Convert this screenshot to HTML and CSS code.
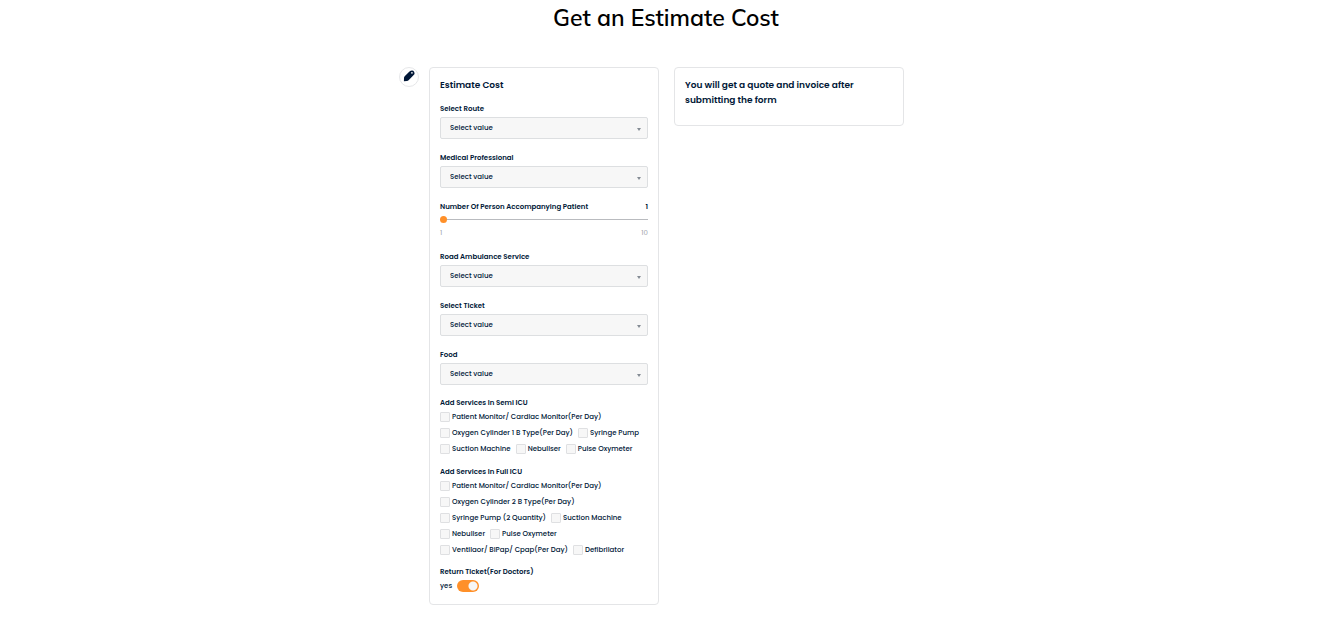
FILE: index.html
```
<!DOCTYPE html>
<html lang="en">
<head>
<meta charset="utf-8">
<meta name="viewport" content="width=device-width, initial-scale=1">
<title>Get an Estimate Cost</title>
<link rel="stylesheet" href="styles.css">
</head>
<body>
<main class="page">
  <h1 class="page-title">Get an Estimate Cost</h1>
  <div class="layout">
    <button class="edit" type="button" aria-label="Edit">
      <svg viewBox="0 0 12 12" width="12" height="12" aria-hidden="true"><path fill="#001737" fill-rule="evenodd" d="M6.2 1.7Q8.4-.2 10.3.7 12.2 2.4 11.2 4.6L5.6 10.2Q4.8 10.8 4 10.9L.9 11.3 1 8Q1.1 6.8 1.7 6.2ZM8.9 2.1a.8.8 0 1 0 .1 1.6.8.8 0 0 0-.1-1.6Z"/></svg>
    </button>
    <form class="card">
      <h2 class="card-title">Estimate Cost</h2>
      <div class="field">
        <label class="label" for="route">Select Route</label>
        <div class="select"><select id="route"><option>Select value</option></select></div>
      </div>
      <div class="field">
        <label class="label" for="medical">Medical Professional</label>
        <div class="select"><select id="medical"><option>Select value</option></select></div>
      </div>
      <div class="field range">
        <div class="range-head"><label class="label" for="persons">Number Of Person Accompanying Patient</label><output class="label" for="persons">1</output></div>
        <input class="slider" id="persons" type="range" min="1" max="10" value="1">
        <div class="range-scale"><span>1</span><span>10</span></div>
      </div>
      <div class="field">
        <label class="label" for="road">Road Ambulance Service</label>
        <div class="select"><select id="road"><option>Select value</option></select></div>
      </div>
      <div class="field">
        <label class="label" for="ticket">Select Ticket</label>
        <div class="select"><select id="ticket"><option>Select value</option></select></div>
      </div>
      <div class="field">
        <label class="label" for="food">Food</label>
        <div class="select"><select id="food"><option>Select value</option></select></div>
      </div>
      <fieldset class="services">
        <legend class="label">Add Services In Semi ICU</legend>
        <div class="checks">
          <label class="check"><input type="checkbox">Patient Monitor/ Cardiac Monitor(Per Day)</label>
          <label class="check"><input type="checkbox">Oxygen Cylinder 1 B Type(Per Day)</label>
          <label class="check"><input type="checkbox">Syringe Pump</label>
          <label class="check"><input type="checkbox">Suction Machine</label>
          <label class="check"><input type="checkbox">Nebuliser</label>
          <label class="check"><input type="checkbox">Pulse Oxymeter</label>
        </div>
      </fieldset>
      <fieldset class="services">
        <legend class="label">Add Services In Full ICU</legend>
        <div class="checks">
          <label class="check"><input type="checkbox">Patient Monitor/ Cardiac Monitor(Per Day)</label>
          <label class="check"><input type="checkbox">Oxygen Cylinder 2 B Type(Per Day)</label>
          <label class="check"><input type="checkbox">Syringe Pump (2 Quantity)</label>
          <label class="check"><input type="checkbox">Suction Machine</label>
          <label class="check"><input type="checkbox">Nebuliser</label>
          <label class="check"><input type="checkbox">Pulse Oxymeter</label>
          <label class="check"><input type="checkbox">Ventilaor/ BiPap/ Cpap(Per Day)</label>
          <label class="check"><input type="checkbox">Defibrilator</label>
        </div>
      </fieldset>
      <fieldset class="services">
        <legend class="label">Return Ticket(For Doctors)</legend>
        <label class="toggle">yes<input type="checkbox" role="switch" checked></label>
      </fieldset>
    </form>
    <section class="card">
      <h2 class="card-title">You will get a quote and invoice after submitting the form</h2>
    </section>
  </div>
</main>
</body>
</html>
```
FILE: styles.css
```
* {
  box-sizing: border-box;
}

body {
  margin: 0;
  background: #fff;
  color: #001737;
  font: 500 7px/12px Poppins, Inter, "Liberation Sans", sans-serif;
}

.page {
  padding: 3px 12px 17px;
}

.page-title {
  margin: 0 0 34px;
  padding-left: 5px;
  color: #000;
  font: 600 23px/30px Muli, Mulish, Nunito, "Open Sans", sans-serif;
  text-align: center;
}

.layout {
  display: flex;
  align-items: flex-start;
  gap: 15px;
  max-width: 529px;
  margin: 0 auto;
  padding-right: 24px;
}

.edit {
  display: flex;
  flex: none;
  align-items: center;
  justify-content: center;
  width: 20px;
  height: 20px;
  margin-right: -5px;
  padding: 0 0 2px;
  border: 1px solid #e6e7e9;
  border-radius: 50%;
  background: #fff;
}

.card {
  flex: 1 1 0;
  min-width: 0;
  padding: 10px 10px 10px;
  border: 1px solid #e4e5e7;
  border-radius: 4px;
}

.card-title {
  margin: 0 0 10px;
  font-size: 9px;
  font-weight: 600;
  line-height: 15px;
}

section.card {
  padding-bottom: 7px;
}

.field {
  margin-bottom: 13px;
}

.field:last-of-type {
  margin-bottom: 12px;
}

.label {
  display: block;
  padding: 0;
  font-weight: 600;
}

.select {
  position: relative;
  margin-top: 2px;
}

.select::after {
  content: "";
  position: absolute;
  right: 7px;
  top: 11px;
  border: 2px solid transparent;
  border-top: 3px solid #848b94;
  border-bottom: 0;
  pointer-events: none;
}

.select select {
  display: block;
  width: 100%;
  height: 22px;
  padding: 0 9px 1px;
  border: 1px solid #dddfe1;
  border-radius: 2px;
  appearance: none;
  background: #f7f7f7;
  color: inherit;
  font: inherit;
}

.range {
  margin-bottom: 12px;
}

.range-head,
.range-scale {
  display: flex;
  justify-content: space-between;
}

.slider {
  display: block;
  width: 100%;
  height: 7px;
  margin: 3px 0 4px;
  appearance: none;
  background: linear-gradient(#b9bbbf, #b9bbbf) center / 100% 1px no-repeat;
}

.slider::-webkit-slider-thumb {
  appearance: none;
  width: 7px;
  height: 7px;
  border-radius: 50%;
  background: #ff9029;
}

.range-scale {
  color: #a0a4aa;
  font-weight: 400;
}

.services {
  min-width: 0;
  margin: 0 0 9px;
  padding: 0;
  border: 0;
}

.services + .services {
  margin-bottom: 8px;
}

.services:last-child {
  margin-bottom: 0;
}

.checks {
  display: flex;
  flex-wrap: wrap;
  column-gap: 5px;
}

.check {
  display: flex;
  align-items: center;
  gap: 2px;
  height: 16px;
  white-space: nowrap;
}

.check input {
  width: 10px;
  height: 10px;
  margin: 0;
  border: 1px solid #dfe0e2;
  border-radius: 1px;
  appearance: none;
  background: #f7f7f7;
}

.toggle {
  display: flex;
  align-items: center;
  gap: 5px;
  height: 16px;
}

.services .toggle input {
  width: 22px;
  height: 12px;
  margin: 0;
  border-radius: 6px;
  appearance: none;
  background: radial-gradient(circle at 16px 6px, #f7f7f7 4px, #ff9029 5px);
}
```
